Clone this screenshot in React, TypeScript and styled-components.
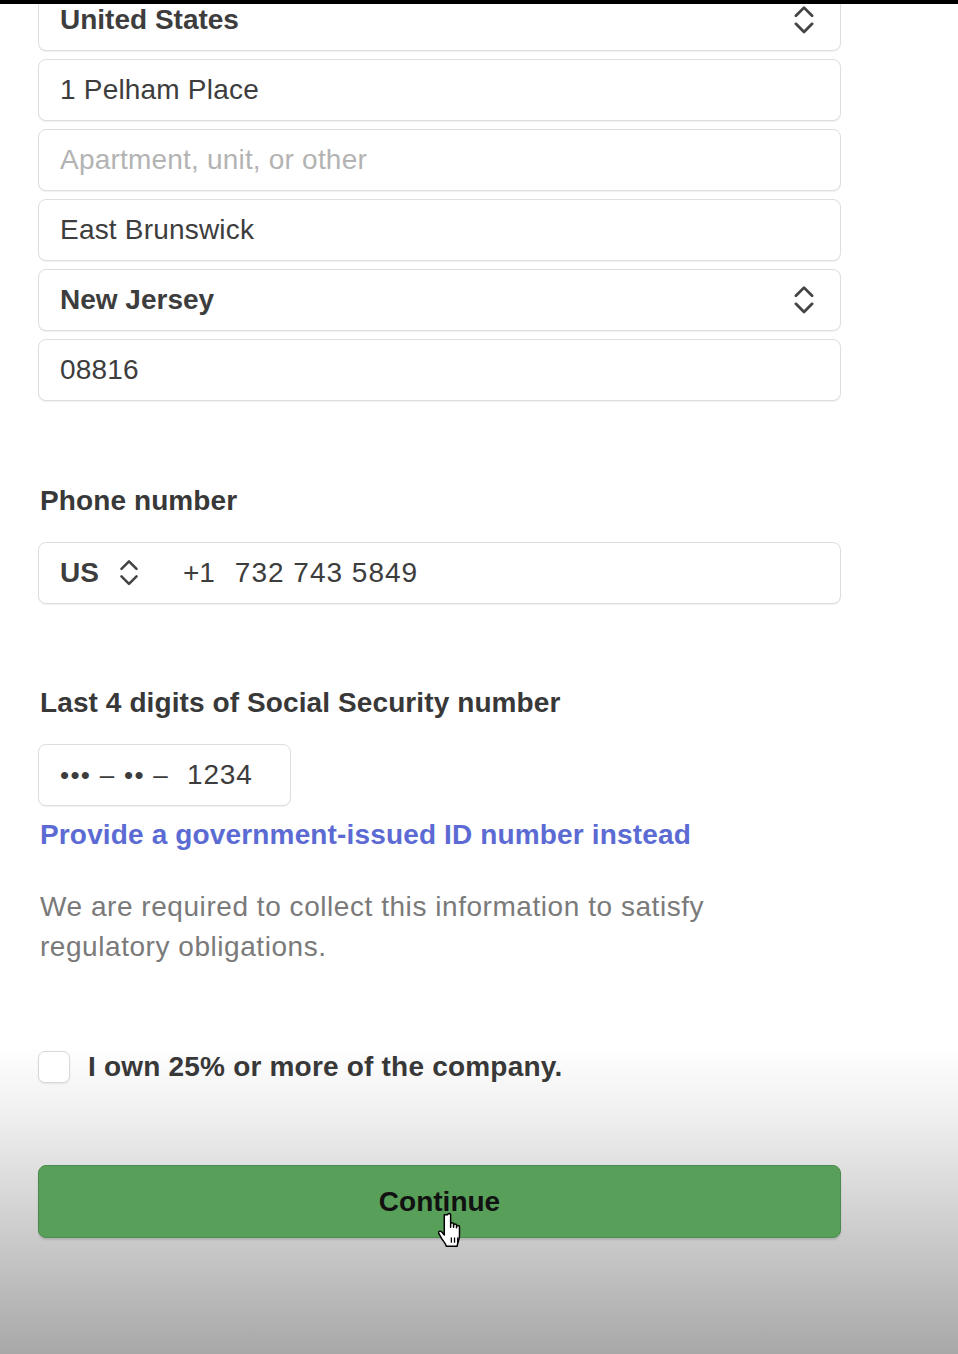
import React from "react";
import styled, { createGlobalStyle } from "styled-components";

const Global = createGlobalStyle`
  html, body { margin: 0; padding: 0; }
  body { font-family: "Liberation Sans", Arial, sans-serif; }
  * { box-sizing: border-box; }
`;

const Page = styled.div`
  position: relative;
  width: 958px;
  height: 1354px;
  overflow: hidden;
  background: linear-gradient(
    to bottom,
    #ffffff 0px,
    #ffffff 1045px,
    #f1f1f1 1110px,
    #dcdcdc 1180px,
    #c4c4c4 1260px,
    #a8a8a8 1354px
  );
`;

const TopBar = styled.div`
  position: absolute;
  top: 0;
  left: 0;
  right: 0;
  height: 4px;
  background: #000;
  z-index: 2;
`;

const Form = styled.div`
  display: flex;
  flex-direction: column;
  width: 803px;
  margin-left: 38px;
  margin-top: -11px;
`;

const FieldStack = styled.div`
  display: flex;
  flex-direction: column;
  gap: 8px;
`;

const Field = styled.div<{ $width?: number }>`
  display: flex;
  align-items: center;
  height: 62px;
  width: ${(p) => (p.$width ? `${p.$width}px` : "100%")};
  padding: 0 22px 0 21px;
  border: 1.5px solid #dedede;
  border-radius: 8px;
  background: #fff;
  box-shadow: 0 1px 1px rgba(0, 0, 0, 0.06);
  font-size: 28px;
  color: #3d3d3d;
`;

const Value = styled.span<{ $bold?: boolean; $muted?: boolean; $spacing?: number }>`
  flex: 1;
  font-weight: ${(p) => (p.$bold ? 700 : 400)};
  color: ${(p) => (p.$muted ? "#b3b3b3" : "#3d3d3d")};
  letter-spacing: ${(p) => (p.$spacing ?? (p.$bold ? 0 : 0.2))}px;
  white-space: nowrap;
`;

const Label = styled.div<{ $top: number }>`
  margin-top: ${(p) => p.$top}px;
  margin-bottom: 23px;
  padding-left: 2px;
  font-size: 28px;
  line-height: 36px;
  font-weight: 700;
  color: #383838;
  letter-spacing: 0.1px;
`;

const CountryCode = styled.span`
  font-weight: 700;
  color: #3d3d3d;
`;

const PhoneIcon = styled.span`
  display: inline-flex;
  margin-left: 17px;
  margin-right: 41px;
`;

const Prefix = styled.span`
  margin-right: 20px;
`;

const Mask = styled.span`
  font-size: 26px;
  letter-spacing: 1.3px;
  margin-right: 18px;
  color: #3d3d3d;
  white-space: nowrap;
`;

const Link = styled.a`
  margin-top: 11px;
  padding-left: 2px;
  font-size: 28px;
  line-height: 36px;
  font-weight: 700;
  color: #5c6bd3;
  letter-spacing: 0.15px;
  text-decoration: none;
`;

const Note = styled.p`
  margin: 34px 0 0;
  padding-left: 2px;
  width: 720px;
  font-size: 28px;
  line-height: 40px;
  letter-spacing: 0.55px;
  color: #7a7a7a;
`;

const CheckRow = styled.label`
  display: flex;
  align-items: center;
  gap: 18px;
  margin-top: 82px;
  height: 36px;
  font-size: 28px;
  font-weight: 700;
  letter-spacing: 0.2px;
  color: #383838;
`;

const Box = styled.span`
  width: 32px;
  height: 32px;
  border: 1.5px solid #d8d8d8;
  border-radius: 7px;
  background: #fff;
  box-shadow: 0 1px 2px rgba(0, 0, 0, 0.08);
`;

const Button = styled.button`
  position: relative;
  margin-top: 80px;
  height: 73px;
  width: 100%;
  border: 1px solid #4b8c4d;
  border-radius: 8px;
  background: #589f59;
  box-shadow: 0 2px 2px rgba(0, 0, 0, 0.12);
  font-family: "Liberation Sans", Arial, sans-serif;
  font-size: 28px;
  font-weight: 700;
  color: #111;
`;

const Cursor = styled.span`
  position: absolute;
  left: 399px;
  top: 45px;
  display: flex;
`;

const Chevrons = ({ size = 28 }: { size?: number }) => (
  <svg width={size} height={size * 1.2} viewBox="0 0 24 29" fill="none">
    <path d="M5 11 L12 4 L19 11" stroke="#444" strokeWidth="2.4" strokeLinecap="round" strokeLinejoin="round" />
    <path d="M5 18 L12 25 L19 18" stroke="#444" strokeWidth="2.4" strokeLinecap="round" strokeLinejoin="round" />
  </svg>
);

const HandCursor = () => (
  <svg width="32" height="38" viewBox="0 0 30 36">
    <path
      d="M9 3.5c0-1.6 2.8-1.6 2.8 0v12 -3.2c0-1.6 2.8-1.6 2.8 0v3 -1.8c0-1.6 2.8-1.6 2.8 0v2.4 -1c0-1.6 2.8-1.6 2.8 0v8.2c0 4-2.2 7.4-2.2 10.4h-10.2c-.6-2.6-2.6-4.4-4.6-7.6l-2.6-4.6c-.9-1.6 1.2-3 2.6-1.6l2.6 3V3.5z"
      fill="#fff"
      stroke="#000"
      strokeWidth="1.4"
      strokeLinejoin="round"
    />
    <path d="M12.5 25v5M15.5 25v5M18.5 25v5" stroke="#000" strokeWidth="1.2" />
  </svg>
);

export default function App() {
  return (
    <>
      <Global />
      <Page>
        <TopBar />
        <Form>
          <FieldStack>
            <Field>
              <Value $bold>United States</Value>
              <Chevrons />
            </Field>
            <Field>
              <Value>1 Pelham Place</Value>
            </Field>
            <Field>
              <Value $muted>Apartment, unit, or other</Value>
            </Field>
            <Field>
              <Value>East Brunswick</Value>
            </Field>
            <Field>
              <Value $bold>New Jersey</Value>
              <Chevrons />
            </Field>
            <Field>
              <Value>08816</Value>
            </Field>
          </FieldStack>

          <Label $top={82}>Phone number</Label>
          <Field>
            <CountryCode>US</CountryCode>
            <PhoneIcon>
              <Chevrons size={26} />
            </PhoneIcon>
            <Prefix>+1</Prefix>
            <Value $spacing={1}>732 743 5849</Value>
          </Field>

          <Label $top={81}>Last 4 digits of Social Security number</Label>
          <Field $width={253}>
            <Mask>••• – •• –</Mask>
            <Value $spacing={0.8}>1234</Value>
          </Field>
          <Link href="#">Provide a government-issued ID number instead</Link>

          <Note>We are required to collect this information to satisfy regulatory obligations.</Note>

          <CheckRow>
            <Box />
            I own 25% or more of the company.
          </CheckRow>

          <Button>
            Continue
            <Cursor>
              <HandCursor />
            </Cursor>
          </Button>
        </Form>
      </Page>
    </>
  );
}
